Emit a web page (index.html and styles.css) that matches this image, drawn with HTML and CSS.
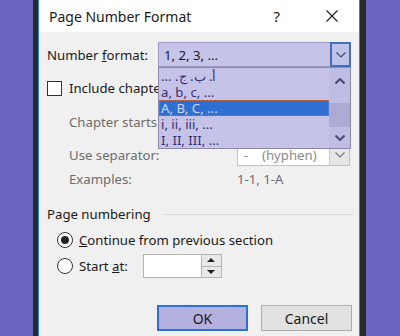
FILE: index.html
```html
<!DOCTYPE html>
<html lang="en">
<head>
  <meta charset="UTF-8">
  <title>Page Number Format</title>
  <link rel="stylesheet" href="styles.css">
</head>
<body>
  <div class="frame">
    <div class="dialog">
      <div class="titlebar">
        <span class="title">Page Number Format</span>
        <span class="help">?</span>
        <svg class="close" width="12" height="12" viewBox="0 0 12 12">
          <path d="M0.5 0.5 L11.5 11.5 M11.5 0.5 L0.5 11.5" stroke="#222" stroke-width="1.2" fill="none"/>
        </svg>
      </div>

      <div class="body">
        <div class="row row-format">
          <span class="label">Number <u>f</u>ormat:</span>
          <div class="combo">
            <span class="combo-text">1, 2, 3, ...</span>
            <span class="combo-btn">
              <svg width="10" height="6" viewBox="0 0 10 6"><path d="M0.5 0.5 L5 5 L9.5 0.5" stroke="#4a4a72" stroke-width="1.2" fill="none"/></svg>
            </span>
            <div class="dropdown">
              <ul class="items">
                <li><span dir="rtl">أ. ب. ج. ...</span></li>
                <li>a, b, c, ...</li>
                <li class="selected">A, B, C, ...</li>
                <li>i, ii, iii, ...</li>
                <li>I, II, III, ...</li>
              </ul>
              <div class="scrollbar">
                <svg width="10" height="6" viewBox="0 0 10 6"><path d="M0.5 5.5 L5 1 L9.5 5.5" stroke="#4a4670" stroke-width="2" fill="none"/></svg>
                <div class="thumb"></div>
                <svg width="10" height="6" viewBox="0 0 10 6"><path d="M0.5 0.5 L5 5 L9.5 0.5" stroke="#4a4670" stroke-width="2" fill="none"/></svg>
              </div>
            </div>
          </div>
        </div>

        <div class="row row-check">
          <span class="checkbox"></span>
          <span>Include chapter number</span>
        </div>

        <div class="row row-chapter sub">
          <span class="sublabel">Chapter starts with style:</span>
          <div class="select">
            <span class="select-text">Heading 1</span>
            <span class="select-btn"></span>
          </div>
        </div>

        <div class="row row-sep sub">
          <span class="sublabel">Use separator:</span>
          <div class="select">
            <span class="select-text">-&nbsp;&nbsp;&nbsp;&nbsp;(hyphen)</span>
            <span class="select-btn">
              <svg width="10" height="6" viewBox="0 0 10 6"><path d="M0.5 0.5 L5 5 L9.5 0.5" stroke="#777" stroke-width="1.2" fill="none"/></svg>
            </span>
          </div>
        </div>

        <div class="row row-examples sub">
          <span class="sublabel">Examples:</span>
          <span class="example">1-1, 1-A</span>
        </div>

        <div class="row row-group">
          <span>Page numbering</span>
          <span class="rule"></span>
        </div>

        <div class="row row-radio">
          <span class="radio checked"></span>
          <span><u>C</u>ontinue from previous section</span>
        </div>

        <div class="row row-radio2">
          <span class="radio"></span>
          <span class="start-label">Start <u>a</u>t:</span>
          <div class="spin">
            <span class="spin-input"></span>
            <span class="spin-btns">
              <span class="spin-up"></span>
              <span class="spin-down"></span>
            </span>
          </div>
        </div>

        <div class="row row-buttons">
          <button class="btn btn-ok">OK</button>
          <button class="btn">Cancel</button>
        </div>
      </div>
    </div>
  </div>
</body>
</html>
```

FILE: styles.css
```css
body {
  margin: 0;
  background: #6c64c1;
  font-family: "Noto Sans", "Open Sans", sans-serif;
  font-size: 13.2px;
  color: #1a1a1a;
  height: 336px;
  overflow: hidden;
}
.frame {
  margin-left: 33px;
  width: 333px;
  height: 336px;
  box-sizing: border-box;
  background: #2a2a2a;
  padding: 0 6px 0 5px;
}
.dialog {
  height: 100%;
  border-left: 1px solid #1f8ae3;
  border-right: 1px solid #1f8ae3;
  background: #f0f0f0;
}
.titlebar {
  height: 32px;
  background: #fff;
  display: flex;
  align-items: center;
  padding-left: 10px;
}
.title {
  font-size: 14px;
  flex: 1;
}
.help {
  font-size: 15px;
  margin-right: 46px;
}
.close {
  margin-right: 21px;
}
.body {
  padding: 10px 0 0 8px;
}
.row {
  display: flex;
  align-items: center;
}
.row-format {
  height: 25px;
}
.label {
  width: 111px;
}
.combo {
  position: relative;
  width: 193px;
  height: 25px;
  box-sizing: border-box;
  border: 1px solid #9d9abf;
  background: #c7c4e9;
  display: flex;
  align-items: center;
}
.combo-text {
  flex: 1;
  padding-left: 5px;
}
.combo-btn {
  width: 21px;
  height: 25px;
  margin: -1px -1px -1px 0;
  box-sizing: border-box;
  border: 2px solid #3f70b8;
  background: #bfc3ec;
  display: flex;
  align-items: center;
  justify-content: center;
}
.dropdown {
  position: absolute;
  left: -1px;
  top: 24px;
  width: 193px;
  height: 82px;
  box-sizing: border-box;
  border: 1px solid #8c89ad;
  background: #c6c3e8;
  display: flex;
  z-index: 2;
}
.items {
  list-style: none;
  margin: 0;
  padding: 0;
  flex: 1;
  color: #362f72;
}
.items li {
  height: 16px;
  line-height: 16px;
  padding-left: 2px;
}
.items li.selected {
  background: #2e6fd1;
  color: #cfd6f4;
  outline: 1px dotted #c07050;
  outline-offset: -1px;
}
.scrollbar {
  width: 21px;
  background: #c0bde4;
  display: flex;
  flex-direction: column;
  align-items: center;
  padding-top: 10px;
  box-sizing: border-box;
}
.thumb {
  width: 21px;
  height: 24px;
  background: #aeaad6;
  margin: 19px 0 8px;
}
.row-check {
  margin-top: 13px;
  height: 16px;
}
.checkbox {
  width: 13px;
  height: 13px;
  border: 1px solid #333;
  background: #fff;
  margin-right: 7px;
}
.sub {
  color: #6d6d6d;
}
.sublabel {
  width: 168px;
  padding-left: 22px;
}
.row-chapter {
  margin-top: 16px;
  height: 20px;
}
.row-sep {
  margin-top: 13px;
  height: 20px;
}
.select {
  width: 113px;
  height: 21px;
  box-sizing: border-box;
  border: 1px solid #c2c2c2;
  background: #fff;
  display: flex;
}
.select-text {
  flex: 1;
  padding-left: 6px;
  line-height: 19px;
  color: #8a8a8a;
}
.select-btn {
  width: 19px;
  background: #e6e6e6;
  border-left: 1px solid #c8c8c8;
  display: flex;
  align-items: center;
  justify-content: center;
}
.row-examples {
  margin-top: 6px;
  height: 16px;
}
.row-group {
  margin-top: 19px;
  height: 16px;
}
.rule {
  flex: 1;
  height: 1px;
  background: #dadada;
  margin: 0 6px 0 12px;
}
.row-radio {
  margin-top: 10px;
  height: 16px;
  padding-left: 10px;
}
.radio {
  width: 14px;
  height: 14px;
  border: 1px solid #333;
  border-radius: 50%;
  background: #fff;
  margin-right: 6px;
  position: relative;
}
.radio.checked::after {
  content: "";
  position: absolute;
  left: 3px;
  top: 3px;
  width: 8px;
  height: 8px;
  border-radius: 50%;
  background: #222;
}
.row-radio2 {
  margin-top: 6px;
  height: 24px;
  padding-left: 10px;
}
.start-label {
  width: 64px;
}
.spin {
  display: flex;
  height: 24px;
}
.spin-input {
  width: 59px;
  box-sizing: border-box;
  border: 1px solid #b5b5b5;
  background: #fff;
}
.spin-btns {
  width: 20px;
  display: flex;
  flex-direction: column;
  border: 1px solid #b5b5b5;
  border-left: none;
  background: #e8e8e8;
  box-sizing: border-box;
}
.spin-up, .spin-down {
  flex: 1;
  position: relative;
}
.spin-up {
  border-bottom: 1px solid #b5b5b5;
}
.spin-up::after, .spin-down::after {
  content: "";
  position: absolute;
  left: 5px;
  top: 3px;
  border-left: 4px solid transparent;
  border-right: 4px solid transparent;
}
.spin-up::after {
  border-bottom: 4px solid #222;
}
.spin-down::after {
  border-top: 4px solid #222;
}
.row-buttons {
  margin-top: 27px;
  justify-content: flex-end;
  gap: 13px;
  padding-right: 7px;
}
.btn {
  width: 91px;
  height: 26px;
  font-family: inherit;
  font-size: 14px;
  color: #1a1a1a;
  background: #e1e1e1;
  border: 1px solid #adadad;
}
.btn-ok {
  background: #b5b1df;
  border: 2px solid #2a70d8;
}
```
